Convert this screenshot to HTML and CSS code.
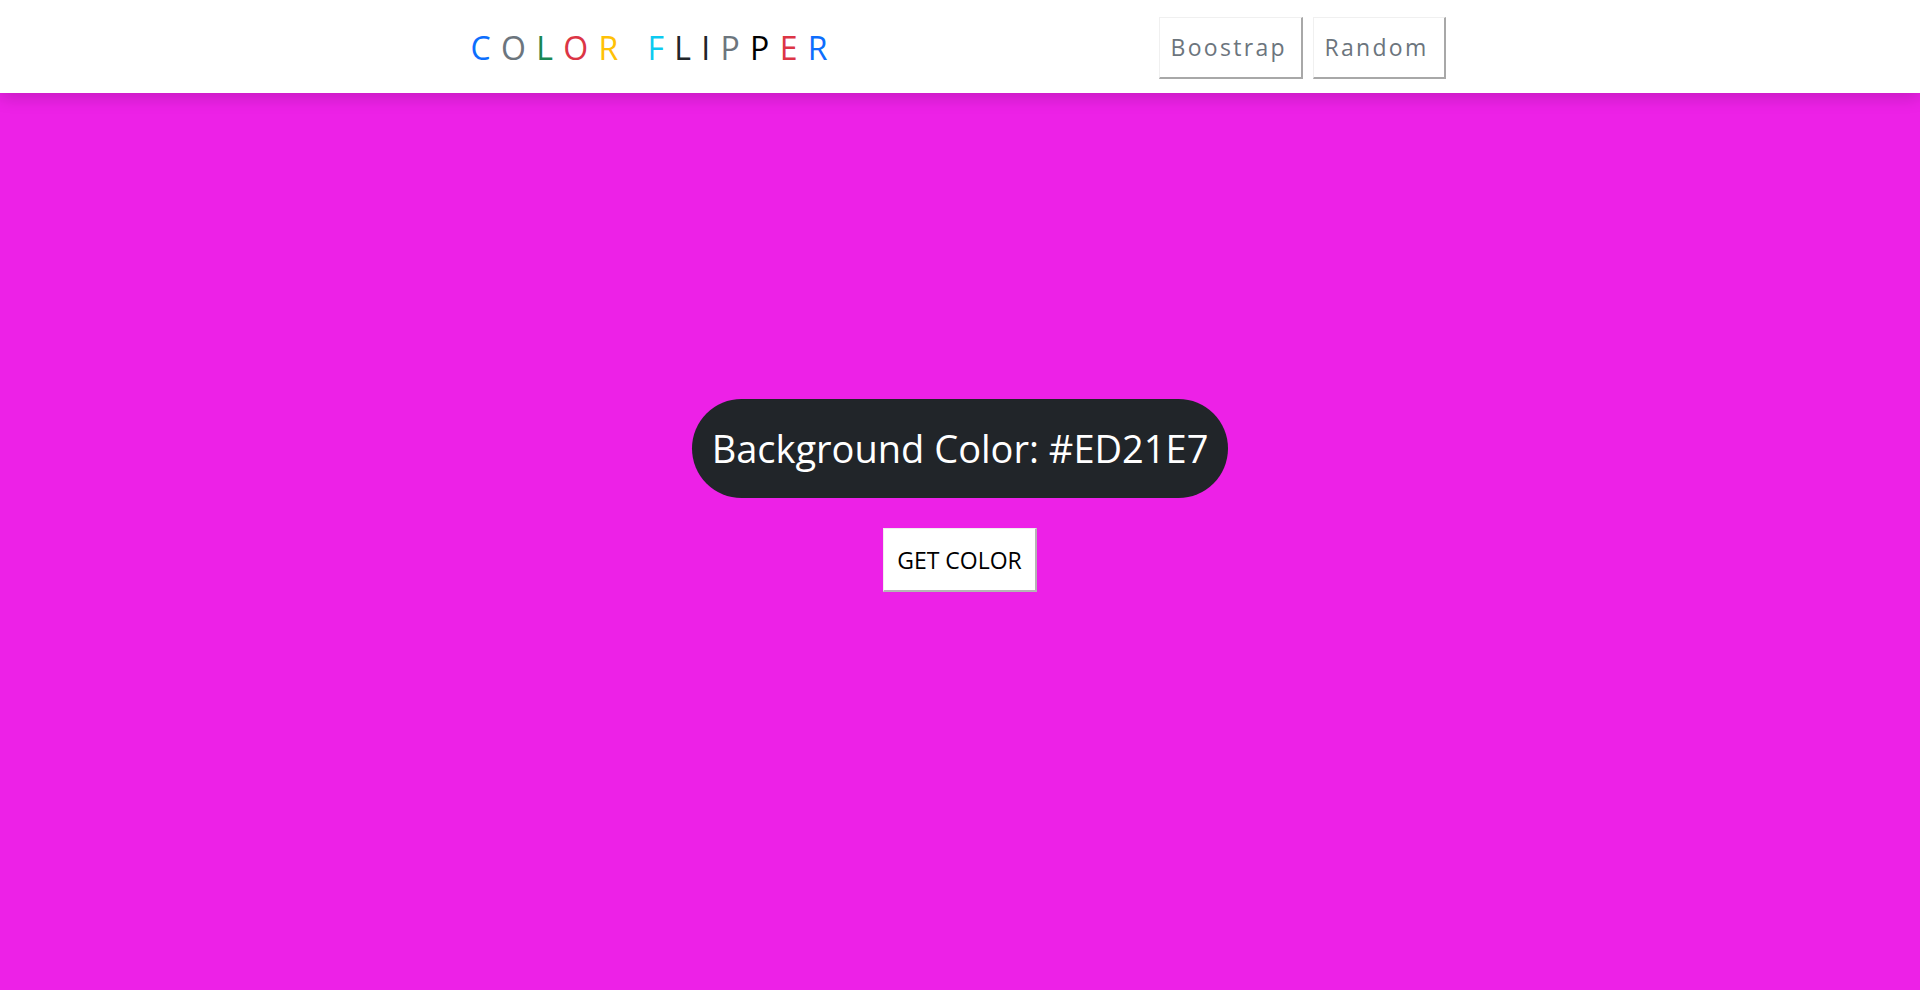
FILE: index.html
```html
<!DOCTYPE html>
<html lang="en">
<head>
<meta charset="utf-8">
<title>Color Flipper</title>
<link rel="stylesheet" href="styles.css">
</head>
<body>
<nav class="nav">
  <div class="nav-inner">
    <h1 class="logo">
      <span class="c-blue">C</span><span class="c-gray">O</span><span class="c-green">L</span><span class="c-red">O</span><span class="c-yellow">R</span><span class="gap"></span><span class="c-cyan">F</span><span class="c-dark">L</span><span class="c-dark">I</span><span class="c-gray">P</span><span class="c-black">P</span><span class="c-red">E</span><span class="c-blue">R</span>
    </h1>
    <div class="links">
      <a class="link" href="#">Boostrap</a>
      <a class="link" href="#">Random</a>
    </div>
  </div>
</nav>
<main class="main">
  <h2 class="pill">Background Color: #ED21E7</h2>
  <button class="btn">GET COLOR</button>
</main>
</body>
</html>
```

FILE: styles.css
```css
* { box-sizing: border-box; }
html, body { margin: 0; height: 100%; }
body {
  font-family: "Open Sans", "Noto Sans", sans-serif;
  background: #ED21E7;
  overflow: hidden;
}
.nav {
  background: #fff;
  height: 93px;
  box-shadow: 0 4px 16px rgba(0,0,0,0.18);
  position: relative;
  z-index: 1;
}
.nav-inner {
  width: 975px;
  margin: 0 auto;
  position: relative;
  left: -2px;
  height: 100%;
  display: flex;
  align-items: center;
  justify-content: space-between;
}
.logo {
  margin: 0;
  font-weight: 400;
  font-size: 32px;
  letter-spacing: 10.3px;
  display: flex;
  align-items: center;
  padding-top: 2px;
}
.logo .gap { display: inline-block; width: 19px; }
.c-blue { color: #0d6efd; }
.c-gray { color: #6c757d; }
.c-green { color: #198754; }
.c-red { color: #dc3545; }
.c-yellow { color: #ffc107; }
.c-cyan { color: #0dcaf0; }
.c-dark { color: #212529; }
.c-black { color: #000; }
.links {
  display: flex;
  gap: 10px;
  padding-top: 2px;
}
.link {
  display: inline-block;
  color: #6c757d;
  text-decoration: none;
  font-size: 23px;
  letter-spacing: 2.3px;
  height: 62px;
  line-height: 58px;
  padding: 0 8px 0 11px;
  border-top: 1px solid #f0f0f0;
  border-left: 1px solid #f0f0f0;
  border-right: 2px solid #a8a8a8;
  border-bottom: 2px solid #a8a8a8;
  white-space: nowrap;
}
.link:first-child { width: 144px; }
.link:last-child { width: 133px; }
.main {
  display: flex;
  flex-direction: column;
  align-items: center;
  padding-top: 306px;
}
.pill {
  margin: 0;
  background: #212529;
  color: #fff;
  font-weight: 400;
  font-size: 38px;
  height: 99px;
  line-height: 99px;
  padding: 0 20px;
  border-radius: 50px;
  white-space: nowrap;
}
.btn {
  margin-top: 30px;
  width: 154px;
  height: 64px;
  background: #fff;
  font-family: "Open Sans", "Noto Sans", sans-serif;
  font-size: 23px;
  color: #000;
  padding: 0;
  border-top: 1px solid #eee;
  border-left: 1px solid #eee;
  border-right: 2px solid #b5b5b5;
  border-bottom: 2px solid #b5b5b5;
  cursor: pointer;
}
```
